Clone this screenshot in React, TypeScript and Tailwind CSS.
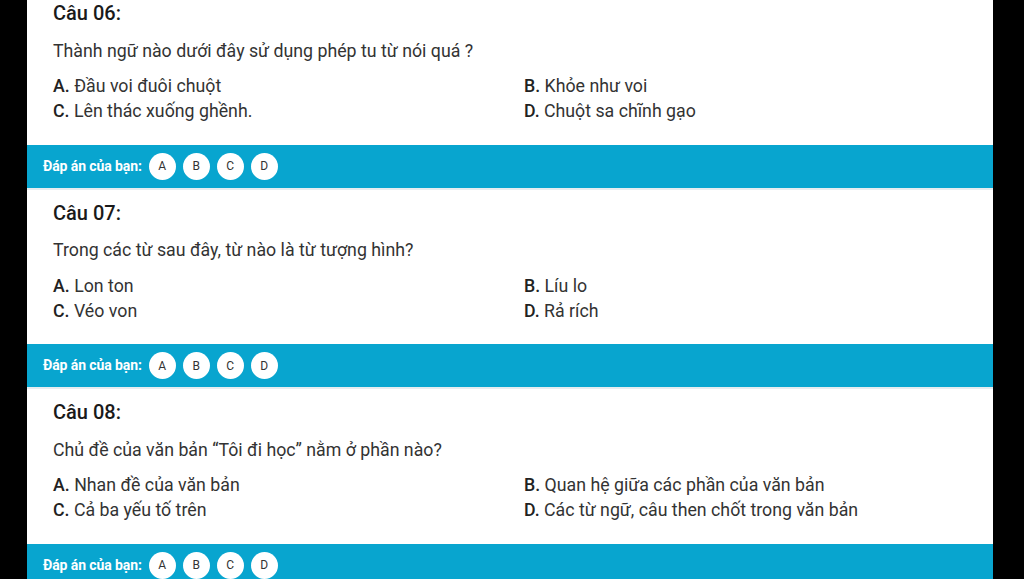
import React from 'react';

type Question = {
  no: string;
  text: string;
  options: { key: string; text: string }[];
};

const questions: Question[] = [
  {
    no: '06',
    text: 'Thành ngữ nào dưới đây sử dụng phép tu từ nói quá ?',
    options: [
      { key: 'A', text: 'Đầu voi đuôi chuột' },
      { key: 'B', text: 'Khỏe như voi' },
      { key: 'C', text: 'Lên thác xuống ghềnh.' },
      { key: 'D', text: 'Chuột sa chĩnh gạo' },
    ],
  },
  {
    no: '07',
    text: 'Trong các từ sau đây, từ nào là từ tượng hình?',
    options: [
      { key: 'A', text: 'Lon ton' },
      { key: 'B', text: 'Líu lo' },
      { key: 'C', text: 'Véo von' },
      { key: 'D', text: 'Rả rích' },
    ],
  },
  {
    no: '08',
    text: 'Chủ đề của văn bản “Tôi đi học” nằm ở phần nào?',
    options: [
      { key: 'A', text: 'Nhan đề của văn bản' },
      { key: 'B', text: 'Quan hệ giữa các phần của văn bản' },
      { key: 'C', text: 'Cả ba yếu tố trên' },
      { key: 'D', text: 'Các từ ngữ, câu then chốt trong văn bản' },
    ],
  },
];

// --- answer bar under each question ---
function AnswerBar() {
  return (
    <div className="border-b-2 border-[#e6edf0]">
      <div className="flex h-[43px] items-center bg-[#08a5cf] pl-4">
        <span className="mr-[7px] text-[14px] font-bold tracking-[-0.1px] text-white">Đáp án của bạn:</span>
        <div className="flex gap-[7px]">
          {['A', 'B', 'C', 'D'].map((k) => (
            <span
              key={k}
              className="flex h-[27px] w-[27px] items-center justify-center rounded-full bg-white text-[12px] text-[#333]"
            >
              {k}
            </span>
          ))}
        </div>
      </div>
    </div>
  );
}

function QuestionBlock({ q, first }: { q: Question; first: boolean }) {
  return (
    <div>
      <div className={`px-[26px] pb-[20.5px] ${first ? 'pt-0' : 'pt-[10px]'}`}>
        <h3 className="text-[20px] font-medium leading-[26px] text-[#1a1a1a]">Câu {q.no}:</h3>
        <p className="mt-[11.5px] text-[17.75px] leading-[26px] text-[#333]">{q.text}</p>
        <div className="mt-[10.5px] grid grid-cols-[471px_1fr] text-[17.75px] leading-[25px] text-[#333]">
          {q.options.map((o) => (
            <div key={o.key}>
              <span className="font-medium text-[#222]">{o.key}.</span> {o.text}
            </div>
          ))}
        </div>
      </div>
      <AnswerBar />
    </div>
  );
}

export default function App() {
  return (
    <div
      className="flex h-[579px] w-[1024px] overflow-hidden bg-black"
      style={{ fontFamily: 'Roboto, "Noto Sans", sans-serif' }}
    >
      <div className="ml-[27px] w-[966px] overflow-hidden bg-white">
        {questions.map((q, i) => (
          <QuestionBlock key={q.no} q={q} first={i === 0} />
        ))}
      </div>
    </div>
  );
}
